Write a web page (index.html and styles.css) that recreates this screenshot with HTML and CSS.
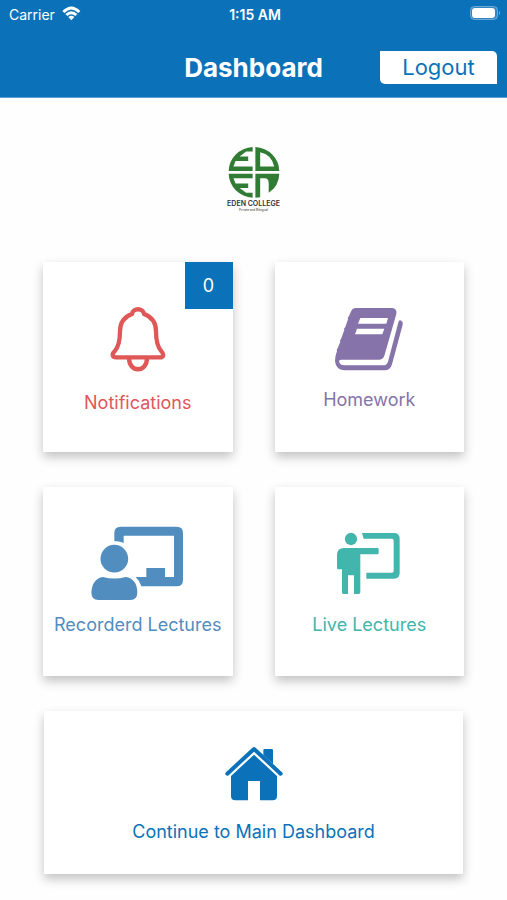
FILE: index.html
```html
<!DOCTYPE html>
<html lang="en">
<head>
<meta charset="utf-8">
<meta name="viewport" content="width=device-width, initial-scale=1">
<title>Dashboard</title>
<link rel="stylesheet" href="styles.css">
</head>
<body>
<header class="header">
  <div class="status">
    <div class="carrier">
      <span>Carrier</span>
      <svg width="20" height="16" viewBox="182 14 60 48" fill="#fff" aria-hidden="true">
        <path d="M186 32Q213 5 240 32L234 38Q213 17 192 38Z"/>
        <path d="M195 41Q213 24 231 41L225 47Q213 36 201 47Z"/>
        <path d="M204 50Q213 43 222 50L213 60Z"/>
      </svg>
    </div>
    <span class="time">1:15 AM</span>
    <svg class="battery" width="31" height="14" viewBox="0 0 31 14" aria-hidden="true">
      <rect x="0.5" y="0.5" width="27" height="13" rx="4" fill="#fff" fill-opacity=".15" stroke="#fff" stroke-opacity=".35"/>
      <rect x="2" y="2" width="23" height="10" rx="3" fill="#fff"/>
      <path d="M29 5q2 2 0 4z" fill="#fff" fill-opacity=".5"/>
    </svg>
  </div>
  <div class="nav">
    <h1 class="title">Dashboard</h1>
    <button class="logout" type="button">Logout</button>
  </div>
</header>
<main class="main">
  <div class="logo">
    <svg width="52" height="53" viewBox="44 33 152 153" fill="#317c35" aria-hidden="true">
      <path d="M116 105H46A74 71 0 0 1 116 35V48H97L78 63H103V76H66L60 92H116Z"/>
      <path fill-rule="evenodd" d="M124 35A74 71 0 0 1 194 105H124ZM138 50V92H179Q172 57 138 50Z"/>
      <path d="M46 113H116V126H60L66 142H103V155H78L97 169H116V183A74 71 0 0 1 46 113Z"/>
      <path d="M124 113H194A74 71 0 0 1 163 169V140Q163 126 151 126H138V182L124 183Z"/>
    </svg>
    <span class="logo-name">EDEN COLLEGE</span>
    <span class="logo-tag">Private and Bilingual</span>
  </div>
  <nav class="grid">
    <a class="card notifications" href="#notifications">
      <span class="icon">
        <svg width="56" height="65" viewBox="240 169 168 195" fill="none" stroke="currentColor" stroke-width="13" stroke-linejoin="round" aria-hidden="true">
          <path d="M306 190C308 171 340 171 342 190C367 199 378 217 378 242C378 276 383 291 395 303C403 311 400 320 390 320H258C248 320 244 311 253 303C265 291 270 276 270 242C270 217 281 199 306 190Z"/>
          <path d="M297 322C297 367 351 367 351 322"/>
        </svg>
      </span>
      <span class="label">Notifications</span>
      <span class="badge">0</span>
    </a>
    <a class="card homework" href="#homework">
      <span class="icon">
        <svg width="70" height="65" viewBox="222 171 210 195" aria-hidden="true">
          <path fill="currentColor" d="M286 174H396Q412 175 409 192L373 317Q369 329 356 329H244Q235 330 238 337Q241 346 252 346H370Q380 346 384 335L416 214Q419 208 425 213Q430 216 428 224L396 343Q391 361 374 361H252Q228 359 225 334Q225 318 231 303Q228 299 233 295L241 275Q238 271 243 267L253 240Q250 236 256 231L264 208Q261 204 267 198L274 182Q277 174 286 174Z"/>
          <path fill="#fff" d="M301 204H384L379 221H294ZM291 236H373L367 253H285Z"/>
        </svg>
      </span>
      <span class="label">Homework</span>
    </a>
    <a class="card recorded" href="#recorded">
      <span class="icon">
        <svg width="93" height="75" viewBox="186 153 279 225" fill="currentColor" aria-hidden="true">
          <path d="M256 201V174Q256 155 275 155H443Q462 155 462 174V315Q462 334 443 334H337Q333 318 320 306H352V279H408V306H435V182H284V204Q270 197 256 199Z"/>
          <circle cx="256" cy="251" r="41.500"/>
          <path d="M222 306Q256 315 290 306Q324 311 325 352Q325 375 304 375H208Q187 375 187 352Q190 311 222 306Z"/>
        </svg>
      </span>
      <span class="label">Recorderd Lectures</span>
    </a>
    <a class="card live" href="#live">
      <span class="icon">
        <svg width="66" height="63" viewBox="228 171 198 189" fill="currentColor" aria-hidden="true">
          <circle cx="273" cy="192" r="18.500"/>
          <path d="M306 174H402Q419 174 419 191V294Q419 311 402 311H319V293H396Q401 293 401 288V197Q401 191 396 191H311Z"/>
          <path d="M252 219H352Q356 219 356 223V234Q356 238 352 238H301V352Q301 357 296 357H282V301H264V357H250Q246 357 246 352V283H235Q231 283 231 278V240Q231 219 252 219Z"/>
        </svg>
      </span>
      <span class="label">Live Lectures</span>
    </a>
    <a class="card wide" href="#main">
      <span class="icon">
        <svg width="58" height="56" viewBox="585 138 174 168" aria-hidden="true">
          <path fill="currentColor" d="M700 165V150Q700 147 704 147H725Q729 147 729 151V192Z"/>
          <path fill="none" stroke="currentColor" stroke-width="12" stroke-linecap="round" stroke-linejoin="round" d="M592 221L672 147L752 221"/>
          <path fill="currentColor" d="M672 164L741 228V288Q741 301 728 301H690V243H654V301H616Q603 301 603 288V228Z"/>
        </svg>
      </span>
      <span class="label">Continue to Main Dashboard</span>
    </a>
  </nav>
</main>
</body>
</html>
```
FILE: styles.css
```css
* {
  box-sizing: border-box;
}

body {
  margin: 0;
  min-height: 100vh;
  background: #fefefe;
  font-family: Inter, "Liberation Sans", sans-serif;
}

.header {
  background: #0b72b9;
  color: #fff;
}

.status,
.nav {
  display: grid;
  grid-template-columns: 1fr auto 1fr;
  align-items: center;
}

.status {
  height: 28px;
  padding: 0 6px 0 9px;
  font-size: 14px;
}

.carrier {
  display: flex;
  align-items: center;
  gap: 6px;
}

.carrier svg {
  margin-bottom: 2px;
}

.time {
  font-weight: 600;
}

.battery {
  justify-self: end;
  margin-bottom: 2px;
}

.nav {
  height: 70px;
  padding: 10px 10px 0;
  border-bottom: 1px solid #5ba0d2;
}

.title {
  grid-column: 2;
  margin: 0;
  font-size: 26px;
  line-height: 32px;
  font-weight: 700;
}

.logout {
  justify-self: end;
  width: 117px;
  height: 33px;
  padding: 0;
  border: 0;
  border-radius: 0 5px 0 5px;
  background: #fff;
  color: #0b72b9;
  font: 400 22px/33px Inter, "Liberation Sans", sans-serif;
}

.main {
  padding: 48px 43px 27px;
}

.logo {
  display: flex;
  flex-direction: column;
  align-items: center;
  height: 116px;
  color: #333;
}

.logo-name {
  margin-top: 1px;
  font-size: 7px;
  line-height: 8px;
  font-weight: 600;
}

.logo-tag {
  font-size: 3px;
  line-height: 4px;
}

.grid {
  display: grid;
  grid-template-columns: 1fr 1fr;
  gap: 35px 42px;
}

.card {
  position: relative;
  display: flex;
  flex-direction: column;
  align-items: center;
  aspect-ratio: 1;
  padding-top: 40px;
  background: #fff;
  box-shadow: 0 5px 10px rgba(0, 0, 0, 0.24);
  text-decoration: none;
}

.icon {
  display: flex;
  align-items: center;
  justify-content: center;
  height: 74px;
}

.label {
  margin-top: 12px;
  font-size: 18px;
  line-height: 24px;
  white-space: nowrap;
}

.notifications {
  color: #df5757;
}

.notifications .label {
  margin-top: 15px;
}

.homework {
  color: #8573a9;
}

.recorded {
  color: #528dc0;
}

.live {
  color: #42b5ac;
}

.wide {
  grid-column: 1 / -1;
  aspect-ratio: auto;
  margin: 0 1px;
  padding: 26px 0 30px;
  color: #0b72b9;
}

.wide .label {
  margin-top: 9px;
}

.badge {
  position: absolute;
  top: 0;
  right: 0;
  width: 48px;
  height: 47px;
  background: #0b72b9;
  color: #fff;
  font-size: 18px;
  line-height: 47px;
  text-align: center;
}
```
